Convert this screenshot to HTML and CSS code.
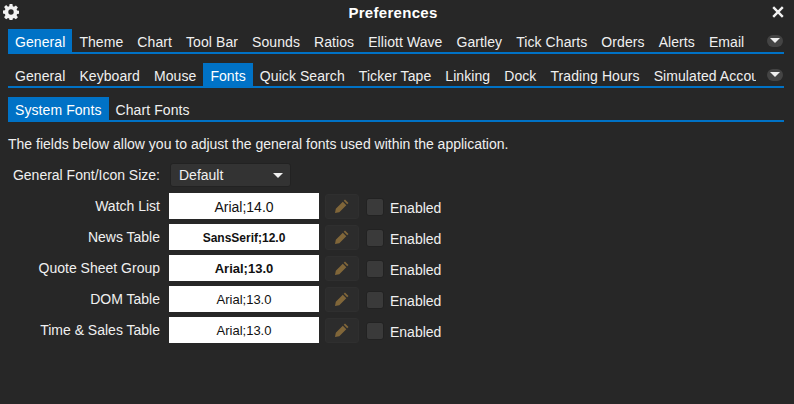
FILE: index.html
```html
<!DOCTYPE html>
<html lang="en">
<head>
  <meta charset="UTF-8">
  <title>Preferences</title>
  <link rel="stylesheet" href="styles.css">
</head>
<body>

  <div class="title-bar">
    <svg class="gear" width="16" height="16" viewBox="0 0 16 16">
      <path fill="#f2f2f2" fill-rule="evenodd" d="M6.600 0h2.800l.4 2.200 1.200.5L12.900 1.400l2 2-1.300 1.900.5 1.200 2.200.4v2.800l-2.200.4-.5 1.200 1.300 1.900-2 2-1.900-1.300-1.200.5-.4 2.200H6.600l-.4-2.200-1.200-.5-1.900 1.300-2-2 1.300-1.900-.5-1.200L-.3 9.400V6.600l2.200-.4.5-1.200L1.100 3.100l2-2L5 2.700l1.200-.5zM8 5.300a2.700 2.700 0 1 0 0 5.400 2.700 2.700 0 0 0 0-5.400z"/>
    </svg>
    <span class="title">Preferences</span>
    <svg class="close" width="12" height="12" viewBox="0 0 12 12">
      <path d="M1.200 1.200l9.600 9.600M10.800 1.200l-9.600 9.600" stroke="#f2f2f2" stroke-width="2.400" fill="none"/>
    </svg>
  </div>

  <div class="tab-row">
    <div class="tabs">
      <a class="tab active">General</a>
      <a class="tab">Theme</a>
      <a class="tab">Chart</a>
      <a class="tab">Tool Bar</a>
      <a class="tab">Sounds</a>
      <a class="tab">Ratios</a>
      <a class="tab">Elliott Wave</a>
      <a class="tab">Gartley</a>
      <a class="tab">Tick Charts</a>
      <a class="tab">Orders</a>
      <a class="tab">Alerts</a>
      <a class="tab">Email</a>
    </div>
    <span class="more"></span>
  </div>

  <div class="tab-row">
    <div class="tabs">
      <a class="tab">General</a>
      <a class="tab">Keyboard</a>
      <a class="tab">Mouse</a>
      <a class="tab active">Fonts</a>
      <a class="tab">Quick Search</a>
      <a class="tab">Ticker Tape</a>
      <a class="tab">Linking</a>
      <a class="tab">Dock</a>
      <a class="tab">Trading Hours</a>
      <a class="tab">Simulated Account</a>
    </div>
    <span class="more"></span>
  </div>

  <div class="tab-row">
    <div class="tabs">
      <a class="tab active">System Fonts</a>
      <a class="tab">Chart Fonts</a>
    </div>
  </div>

  <p class="intro">The fields below allow you to adjust the general fonts used within the application.</p>

  <div class="size-row">
    <label>General Font/Icon Size:</label>
    <div class="select">Default<span class="arrow"></span></div>
  </div>

  <div class="font-row">
    <label>Watch List</label>
    <div class="font-box">Arial;14.0</div>
    <button class="edit"><svg width="16" height="16" viewBox="0 0 16 16"><path fill="#806639" d="M11 1.500l3.500 3.500-1.300 1.300-3.500-3.500zM8.800 3.700l3.500 3.500-7 7-4.300.8.800-4.300z"/></svg></button>
    <span class="check"></span>
    <span class="enabled">Enabled</span>
  </div>

  <div class="font-row">
    <label>News Table</label>
    <div class="font-box small">SansSerif;12.0</div>
    <button class="edit"><svg width="16" height="16" viewBox="0 0 16 16"><path fill="#806639" d="M11 1.500l3.500 3.500-1.300 1.300-3.500-3.500zM8.800 3.700l3.500 3.500-7 7-4.300.8.800-4.300z"/></svg></button>
    <span class="check"></span>
    <span class="enabled">Enabled</span>
  </div>

  <div class="font-row">
    <label>Quote Sheet Group</label>
    <div class="font-box bold">Arial;13.0</div>
    <button class="edit"><svg width="16" height="16" viewBox="0 0 16 16"><path fill="#806639" d="M11 1.500l3.500 3.500-1.300 1.300-3.500-3.500zM8.800 3.700l3.500 3.500-7 7-4.300.8.800-4.300z"/></svg></button>
    <span class="check"></span>
    <span class="enabled">Enabled</span>
  </div>

  <div class="font-row">
    <label>DOM Table</label>
    <div class="font-box normal">Arial;13.0</div>
    <button class="edit"><svg width="16" height="16" viewBox="0 0 16 16"><path fill="#806639" d="M11 1.500l3.500 3.500-1.300 1.300-3.500-3.500zM8.800 3.700l3.500 3.500-7 7-4.300.8.800-4.300z"/></svg></button>
    <span class="check"></span>
    <span class="enabled">Enabled</span>
  </div>

  <div class="font-row">
    <label>Time &amp; Sales Table</label>
    <div class="font-box normal">Arial;13.0</div>
    <button class="edit"><svg width="16" height="16" viewBox="0 0 16 16"><path fill="#806639" d="M11 1.500l3.500 3.500-1.300 1.300-3.500-3.500zM8.800 3.700l3.500 3.500-7 7-4.300.8.800-4.300z"/></svg></button>
    <span class="check"></span>
    <span class="enabled">Enabled</span>
  </div>

</body>
</html>
```

FILE: styles.css
```css
* {
  box-sizing: border-box;
}

body {
  font-family: "Liberation Sans", Arial, sans-serif;
  font-size: 14px;
  background: #272727;
  color: #f0f0f0;
  margin: 0;
  padding: 0 10px 0 8px;
  height: 404px;
  overflow: hidden;
}

.title-bar {
  display: flex;
  align-items: center;
  justify-content: space-between;
  height: 29px;
  padding-bottom: 5px;
  margin-left: -5px;
}

.title {
  font-size: 15px;
  font-weight: bold;
  letter-spacing: .3px;
  color: #fff;
  margin-right: 5px;
}

.tab-row {
  display: flex;
  align-items: center;
  height: 25px;
  margin-bottom: 9px;
  border-bottom: 2px solid #0072c6;
}

.tabs {
  display: flex;
  width: 748px;
  height: 23px;
  overflow: hidden;
}

.tab {
  flex: none;
  padding: 0 7px;
  line-height: 26px;
  letter-spacing: .08px;
  white-space: nowrap;
}

.tab.active {
  background: #0072c6;
  color: #fff;
}

.more {
  display: flex;
  align-items: center;
  justify-content: center;
  width: 16px;
  height: 12px;
  margin-left: 11px;
  border-radius: 6px;
  background: #444;
}

.more::after {
  content: "";
  border-left: 5px solid transparent;
  border-right: 5px solid transparent;
  border-top: 5px solid #f0f0f0;
}

.intro {
  margin: 14px 0 0;
  line-height: 16px;
}

.size-row {
  display: flex;
  align-items: center;
  height: 24px;
  margin-top: 11px;
  margin-bottom: 6px;
}

label {
  width: 152px;
  text-align: right;
  flex: none;
}

.select {
  display: flex;
  align-items: center;
  justify-content: space-between;
  width: 121px;
  height: 24px;
  margin-left: 10px;
  padding: 0 7px 0 8px;
  background: #333;
  border: 1px solid #222;
  border-radius: 3px;
}

.arrow {
  border-left: 5px solid transparent;
  border-right: 5px solid transparent;
  border-top: 5px solid #f0f0f0;
}

.font-row {
  display: flex;
  align-items: center;
  height: 26px;
  margin-bottom: 5px;
}

.font-box {
  width: 150px;
  height: 26px;
  margin-left: 9px;
  background: #fff;
  color: #111;
  line-height: 28px;
  text-align: center;
}

.font-box.small {
  font-size: 12px;
  font-weight: bold;
}

.font-box.bold {
  font-size: 13px;
  font-weight: bold;
}

.font-box.normal {
  font-size: 13px;
}

.edit {
  display: flex;
  align-items: center;
  justify-content: center;
  width: 34px;
  height: 25px;
  margin-left: 6px;
  padding: 0;
  background: #2c2c2c;
  border: 1px solid #2f2f2f;
  border-radius: 3px;
}

.check {
  width: 18px;
  height: 18px;
  margin-left: 7px;
  margin-top: 1px;
  background: #3a3a3a;
  border: 1px solid #222;
  border-radius: 3px;
}

.enabled {
  margin-left: 6px;
  padding-top: 3px;
}
```
